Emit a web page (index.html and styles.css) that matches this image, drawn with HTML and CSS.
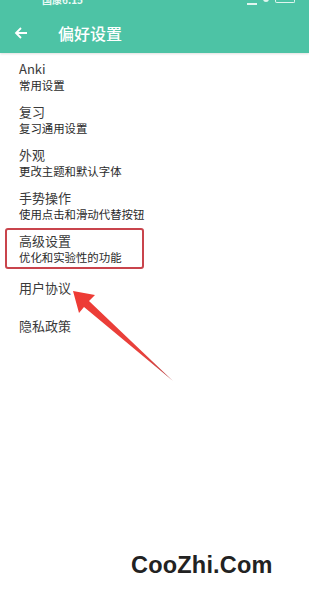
FILE: index.html
```html
<!DOCTYPE html>
<html lang="zh">
<head>
<meta charset="utf-8">
<link rel="stylesheet" href="styles.css">
</head>
<body>
<div class="screen">
  <header class="appbar">
    <div class="status">
      <span class="status-time">国康6:15</span>
      <span class="status-icons">
        <span class="sig"></span><span class="wifi"></span><span class="batt"></span>
      </span>
    </div>
    <div class="bar">
      <svg class="back" width="14" height="14" viewBox="0 0 14 14"><path d="M13 7H2M7 2L2 7l5 5" fill="none" stroke="#fff" stroke-width="1.8"/></svg>
      <span class="title">偏好设置</span>
    </div>
  </header>
  <ul class="list">
    <li class="item"><div class="t">Anki</div><div class="s">常用设置</div></li>
    <li class="item"><div class="t">复习</div><div class="s">复习通用设置</div></li>
    <li class="item"><div class="t">外观</div><div class="s">更改主题和默认字体</div></li>
    <li class="item"><div class="t">手势操作</div><div class="s">使用点击和滑动代替按钮</div></li>
    <li class="item boxed"><div class="t">高级设置</div><div class="s">优化和实验性的功能</div></li>
    <li class="item single"><div class="t">用户协议</div></li>
    <li class="item single"><div class="t">隐私政策</div></li>
  </ul>
  <svg class="arrow" width="309" height="597" viewBox="0 0 309 597">
    <defs>
      <linearGradient id="g" x1="74" y1="292" x2="172" y2="380" gradientUnits="userSpaceOnUse">
        <stop offset="0" stop-color="#ee3b35"/>
        <stop offset="0.7" stop-color="#e8413c"/>
        <stop offset="1" stop-color="#b8484a"/>
      </linearGradient>
    </defs>
    <path d="M73 291 L95 295 L89 301 L173 381 L84 307 L79 313 Z" fill="url(#g)"/>
  </svg>
  <div class="watermark">CooZhi.Com</div>
</div>
</body>
</html>
```
FILE: styles.css
```css
html, body { margin: 0; padding: 0; }
body { width: 309px; height: 597px; overflow: hidden; background: #fff; font-family: "Noto Sans CJK SC", "Noto Sans", sans-serif; }
.screen { position: relative; width: 309px; height: 597px; }
.appbar { background: #4dc3a5; height: 53px; box-shadow: 0 1px 2px rgba(0,0,0,0.12); }
.status { height: 12px; display: flex; justify-content: space-between; align-items: flex-start; padding: 0 14px 0 42px; overflow: hidden; }
.status-time { color: #eafaf5; font-size: 10px; line-height: 10px; margin-top: -5px; font-weight: bold; }
.status-icons { display: flex; gap: 6px; margin-top: -4px; }
.sig { width: 10px; height: 7px; border-bottom: 2px solid #e0f5ef; }
.wifi { width: 6px; height: 6px; background: #e0f5ef; border-radius: 0 0 3px 3px; }
.batt { width: 18px; height: 6px; border: 1px solid #e0f5ef; border-top: none; border-radius: 0 0 2px 2px; }
.bar { height: 41px; display: flex; align-items: center; padding-left: 14px; }
.back { margin-right: 30px; }
.title { color: #fff; font-size: 16px; font-weight: 500; letter-spacing: 0; }
.list { list-style: none; margin: 0; padding: 7px 0 0 0; }
.item { padding: 0 0 0 19px; height: 43px; color: #333; }
.item .t { font-size: 13px; line-height: 17px; color: #3a3a3a; }
.item .s { font-size: 11.4px; line-height: 17px; color: #2a2a2a; }
.item.boxed { height: 36px; position: relative; }
.item.boxed::before { content: ""; position: absolute; left: 5px; top: -4px; width: 135px; height: 37px; border: 2px solid #c9444c; border-radius: 3px; }
.item.single { height: 38px; display: flex; align-items: center; }
.arrow { position: absolute; left: 0; top: 0; }
.watermark { position: absolute; left: 131px; top: 552px; font-family: "Liberation Sans", Arial, sans-serif; font-weight: bold; font-size: 23.5px; color: #222; letter-spacing: 0.2px; }
```
